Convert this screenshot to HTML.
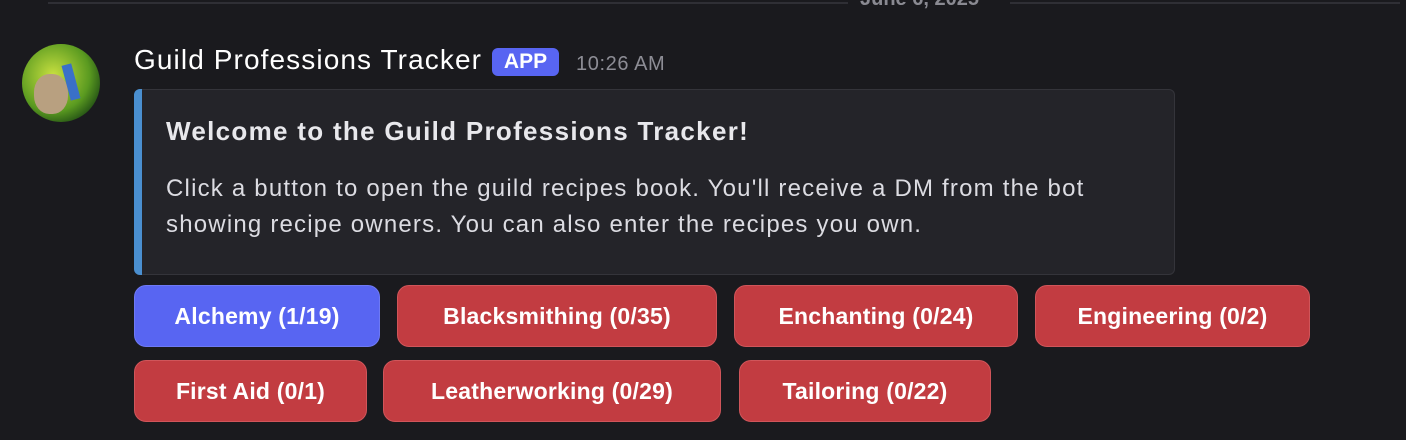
<!DOCTYPE html>
<html><head><style>
body{margin:0;width:1406px;height:440px;background:#1a1a1e;font-family:"Liberation Sans",sans-serif;overflow:hidden;position:relative;color:#fff}
.a{position:absolute}
.btn{position:absolute;height:62px;border-radius:12px;background:#c23c41;border:1px solid #d0555a;box-sizing:border-box;color:#fff;font-size:23px;font-weight:bold;display:flex;align-items:center;justify-content:center;letter-spacing:0.2px;white-space:nowrap}
</style></head><body>
<div class="a" style="left:48px;top:2px;width:800px;height:2px;background:#2f2f35"></div>
<div class="a" style="left:1010px;top:2px;width:390px;height:2px;background:#2f2f35"></div>
<div class="a" style="left:860px;top:-12px;font-size:20px;color:#8a8a92;font-weight:bold">June 6, 2025</div>
<div class="a" style="left:22px;top:44px;width:78px;height:78px;border-radius:50%;overflow:hidden;background:radial-gradient(circle at 40% 40%,#c8e040,#5a9a20 55%,#1e4a14 80%)">
<div class="a" style="left:12px;top:30px;width:34px;height:40px;border-radius:45%;background:#b8a080"></div>
<div class="a" style="left:44px;top:20px;width:10px;height:36px;background:#3a70c8;transform:rotate(-15deg)"></div>
</div>
<div class="a" style="left:134px;top:44px;font-size:28px;letter-spacing:1.1px">Guild Professions Tracker</div>
<div class="a" style="left:492px;top:48px;width:67px;height:28px;background:#5865f2;border-radius:6px;font-size:21px;font-weight:bold;text-align:center;line-height:28px">APP</div>
<div class="a" style="left:576px;top:53px;font-size:20px;color:#8d8d95;letter-spacing:0.6px">10:26 AM</div>
<div class="a" style="left:134px;top:89px;width:1041px;height:186px;background:#242429;border:1px solid #34343a;border-left:none;border-radius:6px;box-sizing:border-box"></div>
<div class="a" style="left:134px;top:89px;width:8px;height:186px;background:#4a8fd0;border-radius:6px 0 0 6px"></div>
<div class="a" style="left:166px;top:116px;font-size:26px;font-weight:bold;color:#e8e8ec;letter-spacing:1.3px">Welcome to the Guild Professions Tracker!</div>
<div class="a" style="left:166px;top:171px;font-size:24px;line-height:36px;color:#dcdce2;letter-spacing:1.2px;width:1010px;white-space:nowrap">Click a button to open the guild recipes book. You'll receive a DM from the bot<br>showing recipe owners. You can also enter the recipes you own.</div>
<div class="btn" style="left:134px;top:285px;width:246px;background:#5865f2;border-color:#6e79f4">Alchemy (1/19)</div>
<div class="btn" style="left:397px;top:285px;width:320px">Blacksmithing (0/35)</div>
<div class="btn" style="left:734px;top:285px;width:284px">Enchanting (0/24)</div>
<div class="btn" style="left:1035px;top:285px;width:275px">Engineering (0/2)</div>
<div class="btn" style="left:134px;top:360px;width:233px">First Aid (0/1)</div>
<div class="btn" style="left:383px;top:360px;width:338px">Leatherworking (0/29)</div>
<div class="btn" style="left:739px;top:360px;width:252px">Tailoring (0/22)</div>
</body></html>
